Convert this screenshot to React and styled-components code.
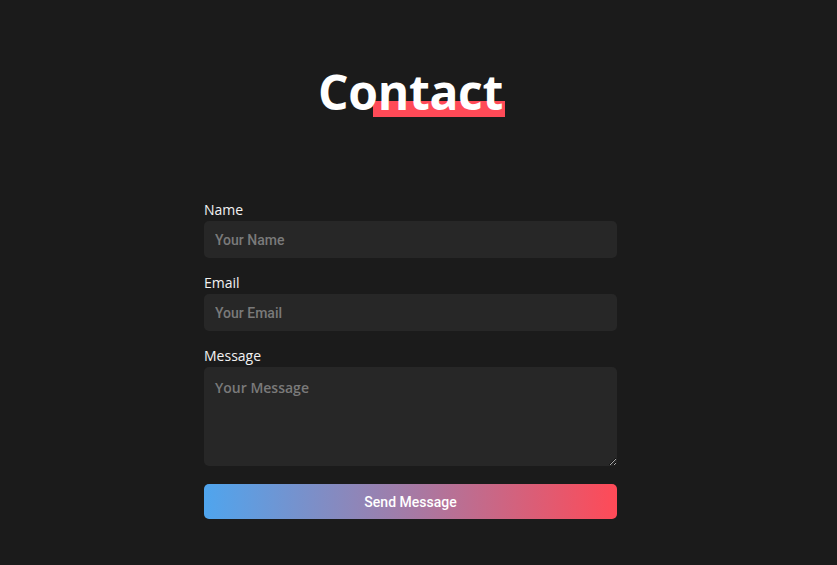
import styled, { createGlobalStyle } from "styled-components";

const GlobalStyle = createGlobalStyle`
  html, body {
    margin: 0;
    background: #1b1b1b;
  }
  * { box-sizing: border-box; }
`;

const App = () => {
  return <Page>
    <GlobalStyle />
    <Title>
      <span>Contact</span>
    </Title>

    <Form onSubmit={(e) => e.preventDefault()}>
      <Field>
        <Label htmlFor="name">Name</Label>
        <Input id="name" placeholder="Your Name" />
      </Field>
      <Field>
        <Label htmlFor="email">Email</Label>
        <Input id="email" placeholder="Your Email" />
      </Field>
      <Field $last>
        <Label htmlFor="message">Message</Label>
        <TextArea id="message" placeholder="Your Message" />
      </Field>
      <Button type="submit">Send Message</Button>
    </Form>
  </Page>
};

export default App;

const Page = styled.main`
  min-height: 565px;
  padding: 63px 16px 40px 0;
  display: flex;
  flex-direction: column;
  align-items: center;
  font-family: "Open Sans", sans-serif;
`;

const Title = styled.h1`
  margin: 0 0 81px;
  font-size: 48px;
  line-height: 58px;
  font-weight: 700;
  letter-spacing: -0.3px;
  color: #fff;
  isolation: isolate;

  span {
    position: relative;
    display: inline-block;
  }
  span::after {
    content: "";
    position: absolute;
    right: -2px;
    bottom: 4px;
    width: 132px;
    height: 16px;
    background: #ff4a57;
    z-index: -1;
  }
`;

const Form = styled.form`
  width: 413px;
  display: flex;
  flex-direction: column;
`;

const Field = styled.div`
  display: flex;
  flex-direction: column;
  margin-bottom: ${(p) => (p.$last ? "18px" : "17px")};
`;

const Label = styled.label`
  font-size: 14px;
  line-height: 16px;
  font-weight: 500;
  color: #f2f2f2;
  margin-bottom: 3px;
`;

const Input = styled.input`
  height: 37px;
  border: none;
  border-radius: 5px;
  background: #272727;
  color: #ddd;
  padding: 0 11px;
  font-family: Roboto, sans-serif;
  font-weight: 500;
  font-size: 14px;
  outline: none;

  &::placeholder {
    color: #7a7a7a;
  }
`;

const TextArea = styled.textarea`
  height: 99px;
  border: none;
  border-radius: 5px;
  background: #272727;
  color: #ddd;
  padding: 11px 11px;
  font-family: "Open Sans", sans-serif;
  font-weight: 600;
  font-size: 14px;
  outline: none;

  &::placeholder {
    color: #7a7a7a;
  }
`;

const Button = styled.button`
  height: 35px;
  border: none;
  border-radius: 5px;
  background: linear-gradient(90deg, #4fa5ee 0%, #9c7fad 45%, #ff4a57 100%);
  color: #fff;
  font-family: Roboto, sans-serif;
  font-weight: 500;
  font-size: 14px;
  cursor: pointer;
`;
